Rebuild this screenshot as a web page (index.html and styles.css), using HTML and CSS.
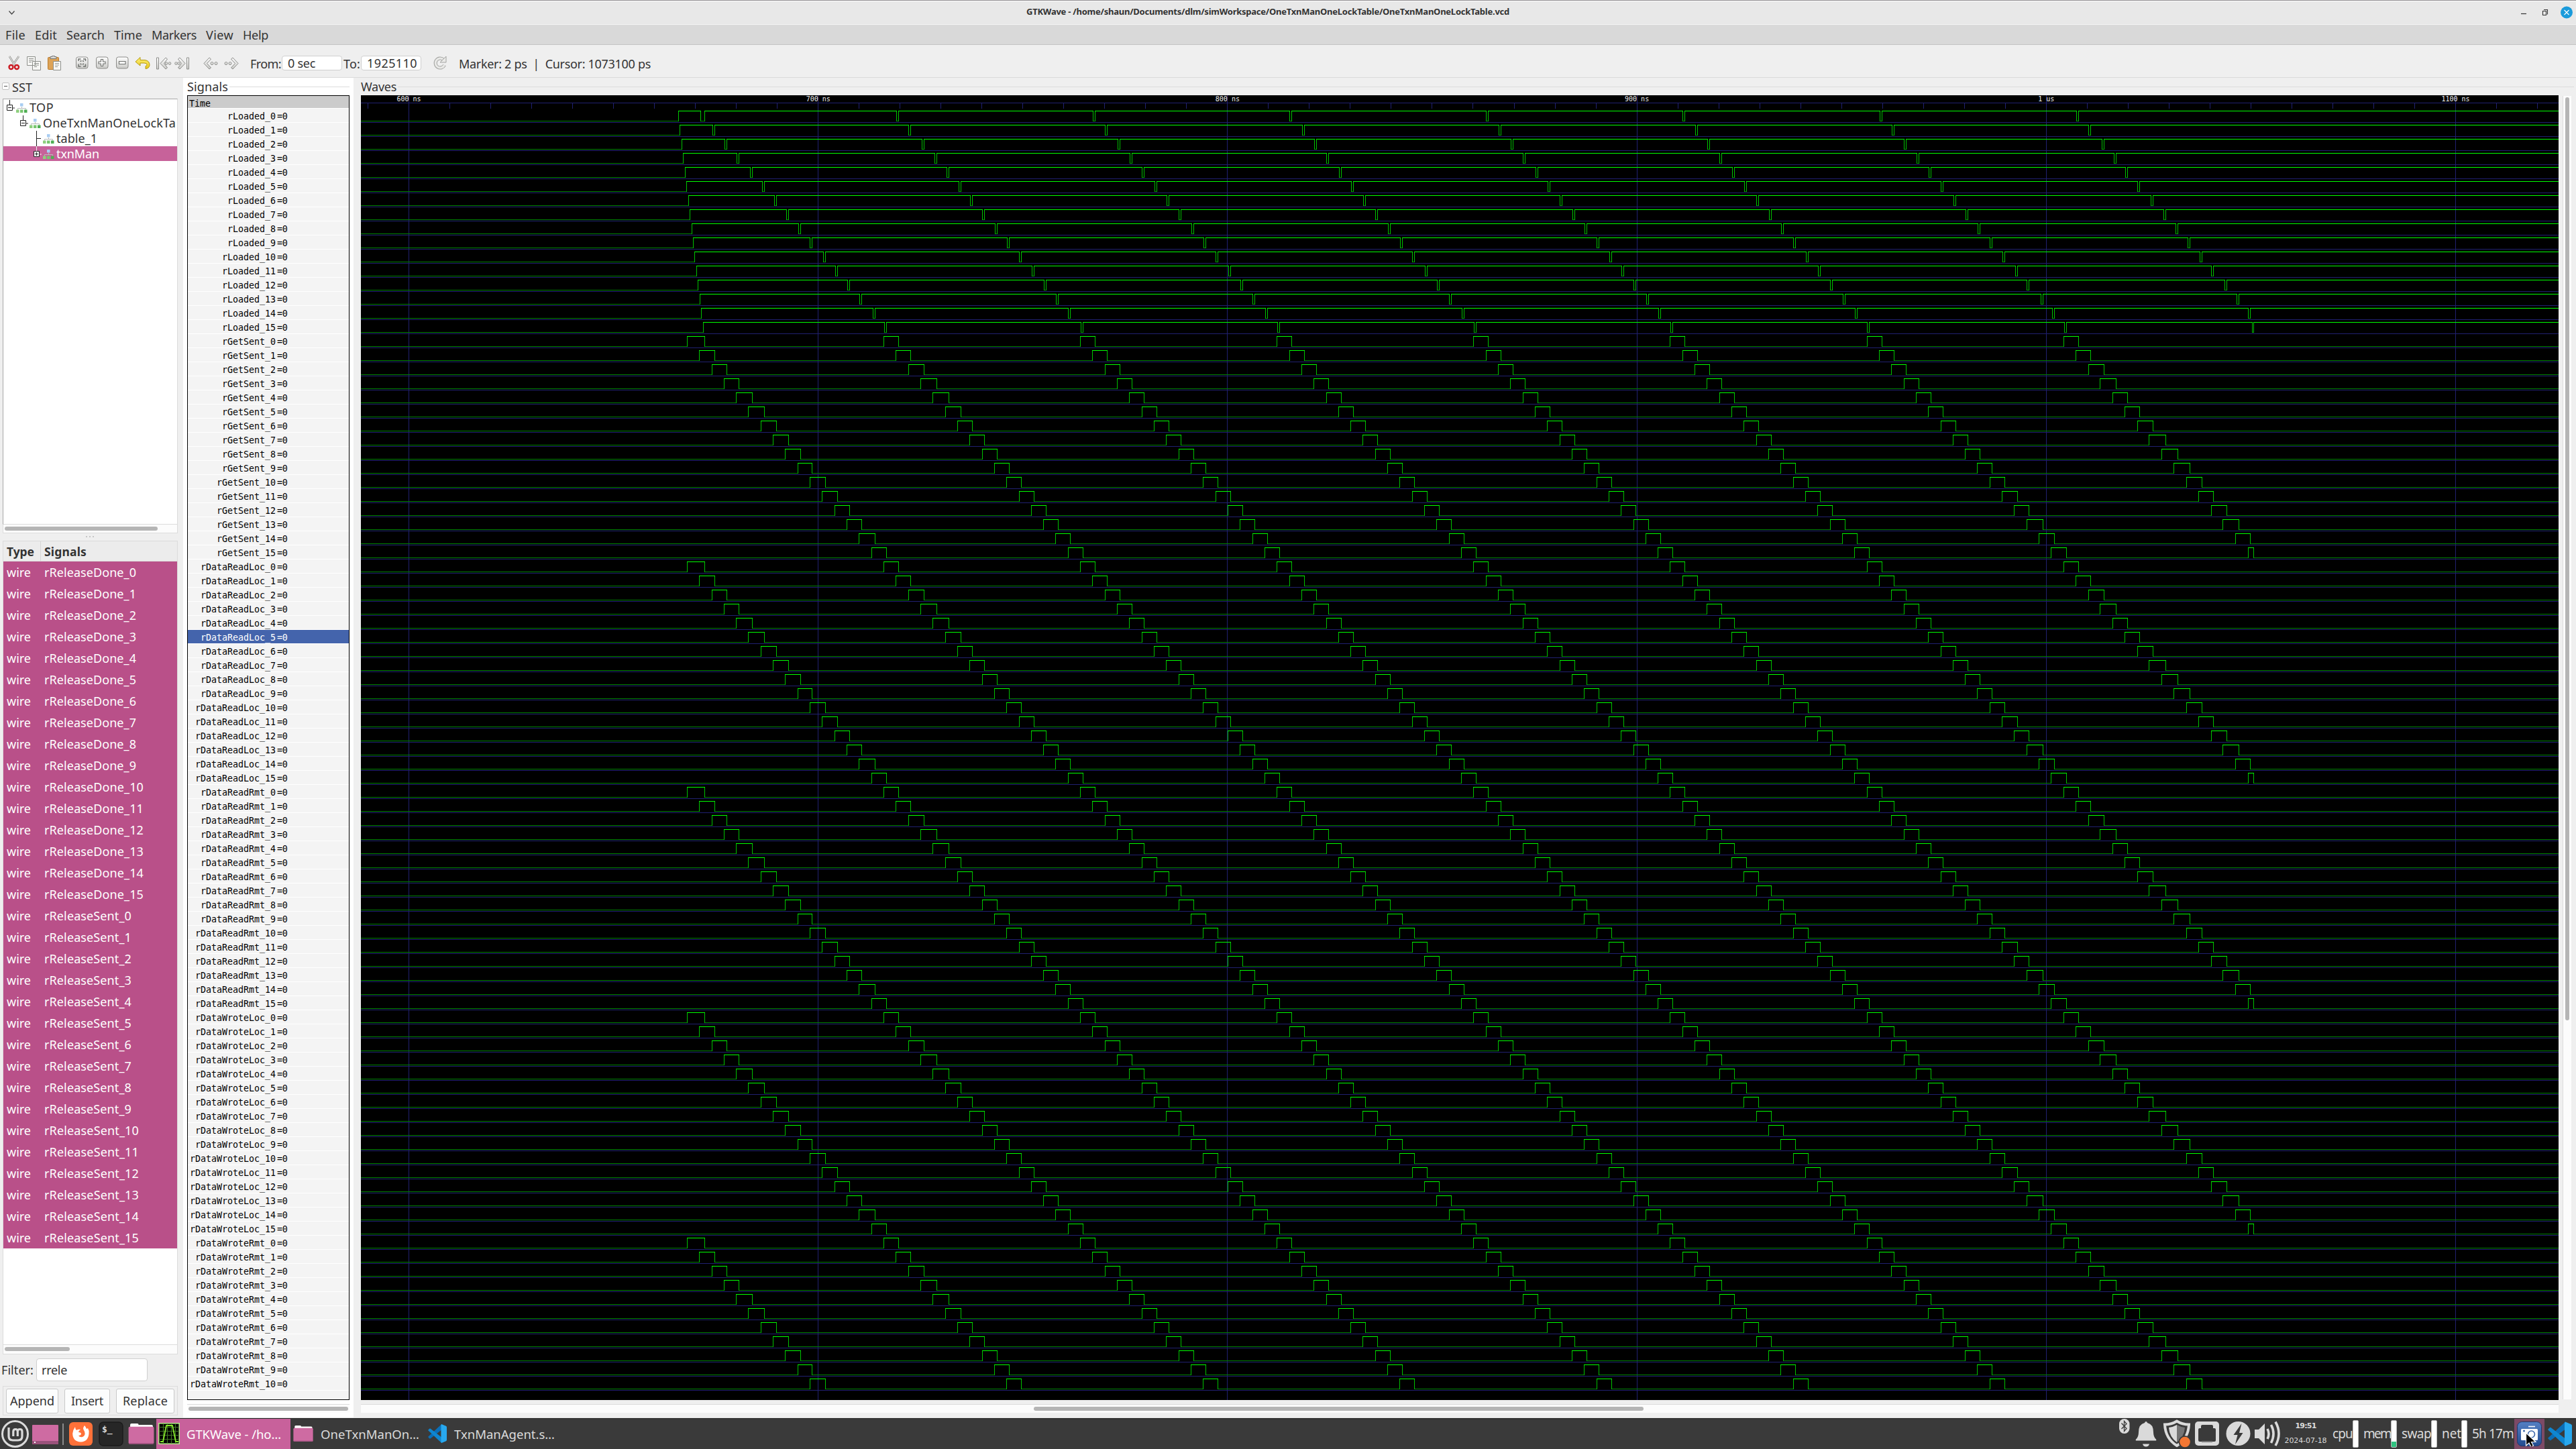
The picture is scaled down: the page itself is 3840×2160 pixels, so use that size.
FILE: index.html
```html
<!DOCTYPE html>
<html lang="en">
<head>
<meta charset="utf-8">
<title>GTKWave</title>
<link rel="stylesheet" href="styles.css">
</head>
<body>
<svg class="defs" width="0" height="0" aria-hidden="true">
  <defs>
    <linearGradient id="silver" x1="0" y1="0" x2="0" y2="1"><stop offset="0" stop-color="#ffffff"/><stop offset="1" stop-color="#c9c9c6"/></linearGradient>
    <linearGradient id="gold" x1="0" y1="0" x2="0" y2="1"><stop offset="0" stop-color="#fff27a"/><stop offset="1" stop-color="#e8c81a"/></linearGradient>
    <linearGradient id="camera" x1="0" y1="0" x2="0" y2="1"><stop offset="0" stop-color="#5580c4"/><stop offset="1" stop-color="#234c91"/></linearGradient>
    <symbol id="modules" viewBox="0 0 17 14">
      <path d="M8.500 5v3M2.500 9.500v-2h12v2" fill="none" stroke="#b9bcbc"/>
      <rect x="6" y="0" width="4.500" height="4.500" fill="#a9cdf2"/>
      <rect x="0" y="9.500" width="4.500" height="4.500" fill="#8fd07f"/><rect x="6" y="9.500" width="4.500" height="4.500" fill="#79c66f"/><rect x="12" y="9.500" width="4.500" height="4.500" fill="#4fae53"/>
    </symbol>
    <symbol id="folder" viewBox="0 0 40 32">
      <path d="M3 8V2q0-2 2-2h9q2 0 2 2h20q2 0 2 2v5z" fill="#fff"/>
      <rect x="0.500" y="5" width="39" height="26.500" rx="2" fill="#ce6ba2"/><rect x="1" y="30" width="38" height="1.500" fill="#a85484"/>
    </symbol>
    <symbol id="vscode" viewBox="0 0 36 36">
      <path d="M26 0v11L4.500 27.500Q3.500 28 2.800 27.300L.6 25.200Q0 24.500.6 23.800z" fill="#0a6fb8"/>
      <path d="M26 36V25L4.500 8.500Q3.500 8 2.800 8.700L.6 10.800Q0 11.500.6 12.200z" fill="#0f86d0"/>
      <path d="M26 0l8.500 3.500Q36 4.200 36 6v24q0 1.800-1.500 2.500L26 36q-1.500-.5-1-2.500V2.500Q24.800.7 26 0z" fill="#28a8ee"/>
    </symbol>
  </defs>
</svg>
<div class="window">
  <header class="titlebar">
    <svg class="chevron" width="11" height="8"><path d="M1.500 1.500l4 4.500 4-4.500" fill="none" stroke="#444" stroke-width="1.300"/></svg>
    <h1 class="title"><span data-fit="720">GTKWave - /home/shaun/Documents/dlm/simWorkspace/OneTxnManOneLockTable/OneTxnManOneLockTable.vcd</span></h1>
    <svg class="winbuttons" width="80" height="20">
      <path d="M1 11.500h8" stroke="#333" stroke-width="1.200"/>
      <path d="M33.500 7.500h5v6h-5zM35 5.500h5.500v7" fill="none" stroke="#333" stroke-width="1.100"/>
      <circle cx="69" cy="9.500" r="9" fill="#1b9bdb"/><path d="M65.500 6l7 7M72.500 6l-7 7" stroke="#fff" stroke-width="1.200"/>
    </svg>
  </header>
  <nav class="menubar">
    <span data-fit="30">File</span><span data-fit="33">Edit</span><span data-fit="57">Search</span><span data-fit="42">Time</span><span data-fit="67">Markers</span><span data-fit="41">View</span><span data-fit="38">Help</span>
  </nav>
  <div class="toolbar">
    <svg class="edit-icons" width="92" height="24">
      <path d="M2 2l8 13M16 2L7 15" stroke="#8f8f8c" stroke-width="2.600"/><path d="M2 2l8 13M16 2L7 15" stroke="#e8e8e6" stroke-width="1.200"/>
      <circle cx="4.500" cy="18" r="3" fill="none" stroke="#cb1a22" stroke-width="2.400"/><circle cx="13" cy="18" r="3" fill="none" stroke="#cb1a22" stroke-width="2.400"/>
      <g fill="#f7f7f5" stroke="#8d8f8b"><path d="M28.500 2.500h12v13h-12zM36.500 9.500h12v13h-12z"/><path d="M31 5.500h7M31 8h7M31 10.500h4M39 12.500h7M39 15h7M39 17.500h4"/></g>
      <rect x="59.500" y="3.500" width="16" height="18" rx="1" fill="#dda357" stroke="#b87a2d"/><path d="M63 5.500v-3h2.500v-1h4v1H72v3z" fill="#d8d8d5" stroke="#777"/>
      <path d="M67.500 9.500h11v13h-11z" fill="#f7f7f5" stroke="#8d8f8b"/><path d="M70 12.500h6M70 15h6M70 17.500h4" stroke="#9a9c98"/>
    </svg>
    <svg class="zoom-icons" width="80" height="22">
      <g fill="url(#silver)" stroke="#8b8b88"><rect x=".5" y="2" width="17.500" height="17" rx="3"/><rect x="30.500" y="2" width="17.500" height="17" rx="3"/><rect x="60.500" y="2" width="17.500" height="17" rx="3"/></g>
      <path d="M4 8V5h3.500M14.500 8V5H11M4 12.500v3.500h3.500M14.500 12.500v3.500H11M6.500 8.500l2-1M12 8.500l-2-1M6.500 12l2 1M12 12l-2 1" fill="none" stroke="#6e706d" stroke-width="1.500"/>
      <path d="M37.500 5.500h3v3.500h3.500v3h-3.500v3.500h-3V12H34V9h3.500z" fill="#fff" stroke="#6e706d" stroke-width="1.100"/><path d="M64.500 8.500h9.500v4h-9.500z" fill="#fff" stroke="#6e706d" stroke-width="1.100"/>
    </svg>
    <svg class="undo-icon" width="23" height="20"><path d="M1 8L8 1.500v4h7q7 1 7 7.500-.5 5-6 5.500v-4q2-.5 2-2 0-2.500-4-2.500H8v4z" fill="url(#gold)" stroke="#b59a10"/></svg>
    <svg class="nav-icons" width="125" height="22" fill="url(#silver)" stroke="#8c8d8a">
      <path d="M1.500 2h3v17h-3zM15 2l2.500 2-5 6.500 5 6.500-2.500 2-8-8.500z"/><circle cx="16" cy="10.500" r="1.800"/><circle cx="21" cy="10.500" r="1.800"/>
      <path d="M46.500 2h3v17h-3zM36 2l-2.500 2 5 6.500-5 6.500 2.500 2 8-8.500z"/><circle cx="34.500" cy="10.500" r="1.800"/><circle cx="30.500" cy="10.500" r="1.800"/>
      <path d="M80 2l2.500 2-6 6.500 6 6.500-2.500 2-8-8.500z"/><circle cx="84" cy="10.500" r="2"/><circle cx="90" cy="10.500" r="2"/>
      <path d="M115 2l-2.500 2 6 6.500-6 6.500 2.500 2 8-8.500z"/><circle cx="111" cy="10.500" r="2"/><circle cx="105" cy="10.500" r="2"/>
    </svg>
    <span class="from-label" data-fit="46">From:</span>
    <div class="time-entry"><span data-fit="41">0 sec</span></div>
    <span class="to-label" data-fit="25">To:</span>
    <div class="time-entry"><span data-fit="75">1925110</span></div>
    <svg class="reload-icon" width="22" height="24"><path d="M16 7A7 7 0 1 0 17.500 15" fill="none" stroke="#a3a4a1" stroke-width="5"/><path d="M16 7A7 7 0 1 0 17.500 15" fill="none" stroke="#e9e9e7" stroke-width="3"/><path d="M20 2v9h-9z" fill="#e9e9e7" stroke="#a3a4a1"/></svg>
    <span class="marker-label" data-fit="286">Marker: 2 ps&nbsp; |&nbsp; Cursor: 1073100 ps</span>
  </div>
  <main class="panes">
    <aside class="sst">
      <div class="sst-title"><i class="collapse"></i><span data-fit="30">SST</span></div>
      <div class="tree">
        <div class="node level0"><svg width="12" height="23"><path d="M4.500 0v7M.5 7.500h8v8h-8zM2 11.500h5M9 12h3" fill="none" stroke="#222"/></svg><svg class="mod" width="17" height="14"><use href="#modules"/></svg><span data-fit="36">TOP</span></div>
        <div class="node level1"><svg width="12" height="23"><path d="M4.500 0v7M.5 7.500h8v8h-8zM2 11.500h5M9 12h3" fill="none" stroke="#222"/></svg><svg class="mod" width="17" height="14"><use href="#modules"/></svg><span data-fit="198">OneTxnManOneLockTa</span></div>
        <div class="node level2"><svg width="12" height="23"><path d="M4.500 0v23M5 11.500h6" fill="none" stroke="#222"/></svg><svg class="mod" width="17" height="14"><use href="#modules"/></svg><span data-fit="61">table_1</span></div>
        <div class="node level2 selected"><svg width="12" height="23"><path d="M4.500 0v7M9 12h3" stroke="#eee"/><path d="M.5 7.500h8v8h-8z" fill="#fff" stroke="#222"/><path d="M2 11.500h5M4.500 9v5" stroke="#222"/></svg><svg class="mod" width="17" height="14"><use href="#modules"/></svg><span data-fit="64">txnMan</span></div>
      </div>
      <div class="hscroll tree-scroll"><i></i></div>
      <div class="grip"><i></i><i></i><i></i></div>
      <div class="table-head"><b class="type" data-fit="41">Type</b><b data-fit="63">Signals</b></div>
      <div class="table" id="wires"></div>
      <div class="hscroll table-scroll"><i></i></div>
      <div class="filter"><span data-fit="48">Filter:</span><div class="filter-entry"><span data-fit="38">rrele</span></div></div>
      <div class="actions"><div class="button append"><span data-fit="66">Append</span></div><div class="button insert"><span data-fit="48">Insert</span></div><div class="button replace"><span data-fit="67">Replace</span></div></div>
    </aside>
    <section class="signals">
      <div class="frame-title"><span data-fit="61">Signals</span></div>
      <div class="names"><div class="time-head">Time</div><div id="names"></div></div>
      <div class="hscroll names-scroll"><i></i></div>
    </section>
    <section class="waves">
      <div class="frame-title"><span data-fit="53">Waves</span></div>
      <div class="wave-row"><svg id="wave" class="wave" width="3276" height="1945" viewBox="538 142 3276 1945"></svg><div class="vscroll"><i></i></div></div>
      <div class="hscroll wave-scroll"><i></i></div>
    </section>
  </main>
</div>
<footer class="taskbar">
  <svg class="launchers" width="231" height="45">
    <circle cx="22.500" cy="22.500" r="19" fill="none" stroke="#dadada" stroke-width="3"/>
    <path d="M13 13v13q0 6 6 6h8q6 0 6-6v-7q0-3.500-3.300-3.500T26.300 19v7M26.300 26v-7q0-3.500-3.200-3.500T19.800 19v7" fill="none" stroke="#dadada" stroke-width="3.200"/>
    <rect x="48" y="9" width="39" height="29" rx="1" fill="#ce6ba2"/><rect x="48" y="33" width="39" height="5" fill="#9a527b"/><rect x="51" y="34" width="2" height="2" fill="#fff"/>
    <rect x="93" y="7" width="2" height="32" fill="#8b8b8b"/>
    <rect x="103" y="5" width="35" height="35" rx="6" fill="#ff7139"/>
    <path d="M112 12q0 3 2 5 3-2 6-1-3 2-3 4 4 0 4 3-1 2-4 2 2 3 6 2 5-2 3-8-2-3-2-5 1-3 2-4 2 2 3 5l2-1q2 3 1.500 8-1 12-12 12.500-12-.5-12.300-12.500.3-5 3.800-10z" fill="#fff"/>
    <rect x="148" y="5" width="35" height="35" rx="6" fill="#262626" stroke="#1b1b1b" stroke-width="1.500"/>
    <text x="152" y="20" class="prompt">$_</text>
    <svg x="191" y="7" width="39" height="31"><use href="#folder"/></svg>
  </svg>
  <div class="task active">
    <svg width="32" height="32"><rect x=".5" y=".5" width="31" height="31" fill="#000" stroke="#b7ee8b" stroke-width="2"/><path d="M7.500 1v30M13.500 1v30M19.500 1v30M25.500 1v30M1 6.500h30M1 12.500h30M1 18.500h30M1 24.500h30" stroke="#3f7524" stroke-width="1.200"/><path d="M3 28h4L12 4h9l5 24h4" fill="none" stroke="#86e82b" stroke-width="1.800"/></svg>
    <span data-fit="141">GTKWave - /ho…</span>
  </div>
  <div class="task files"><svg width="30" height="24" preserveAspectRatio="none"><use href="#folder"/></svg><span data-fit="147">OneTxnManOn…</span></div>
  <div class="task code"><svg width="28" height="28"><use href="#vscode"/></svg><span data-fit="150">TxnManAgent.s…</span></div>
  <svg class="tray" width="245" height="45" fill="#dadada">
    <rect x="3" y="0" width="15.500" height="22" rx="7.500"/><path d="M6.500 6.500l7.500 8-3.500 4v-15l3.500 4-7.500 7.500" fill="none" stroke="#3a3a3a" stroke-width="1.300"/>
    <path d="M43 4q1.500 0 2 2 9 2 9 14 0 7 4 10.500.8 1.500 0 2H28q-.8-.5 0-2 4-3.500 4-10.500 0-12 9-14 .5-2 2-2zM38 37.500h10q-1 4-5 4t-5-4z"/>
    <path d="M89 3.500q8 5 18 5-1 21-18 31.500-17-10.500-18-31.500 10 0 18-5z" fill="none" stroke="#dadada" stroke-width="4"/><path d="M89 9q5 3 12 4-1 14-12 22z" fill="#757575"/><path d="M89 9q-5 3-12 4 1 14 12 22z"/>
    <circle cx="101" cy="34.500" r="9.500" fill="#3a3a3a"/><circle cx="101" cy="34.500" r="7.800" fill="#f47733"/>
    <rect x="116" y="4" width="36" height="36" rx="5"/><path d="M121 16q0-2 2-2h2v-3q0-2 2-2h14q2 0 2 2v3h2q2 0 2 2v16q0 2-2 2h-22q-2 0-2-2z" fill="#3a3a3a"/><path d="M126 34h16" stroke="#777" stroke-width="2"/>
    <circle cx="180.500" cy="22" r="18"/><path d="M185.500 7l-12 17h6l-3.500 14 11.500-17h-5.500z" fill="#3a3a3a"/>
    <path d="M205 16h6l9-9v31l-9-9h-6z"/><path d="M224 15q4 7.500 0 15M229.500 9q7 13 0 27M236 4.500q10 17.500 0 35.500" fill="none" stroke="#dadada" stroke-width="3.600"/>
  </svg>
  <div class="clock"><b data-fit="31">19:51</b><span data-fit="63">2024-07-18</span></div>
  <div class="meters"><span data-fit="30">cpu</span><i class="meter"></i><span data-fit="41">mem</span><i class="meter mem"></i><span data-fit="44">swap</span><i class="meter"></i><span data-fit="29">net</span><i class="meter"></i><span class="battery" data-fit="62">5h 17m</span></div>
  <div class="shot">
    <svg width="37" height="37"><rect x=".5" y=".5" width="36" height="36" rx="7" fill="url(#camera)" stroke="#1e3a6c"/><path d="M17 7.500h10" stroke="#fff" stroke-width="1.600"/><rect x="6" y="11" width="25" height="17" rx="1.500" fill="#fff"/><circle cx="21.500" cy="19" r="5" fill="#fff" stroke="#3d67ab" stroke-width="1.600"/><circle cx="10.500" cy="14" r="1.500" fill="#3d67ab"/><path d="M13.500 17v19l4.500-4 3 6 3.500-2-3-5.500h6.500z" fill="#000" stroke="#fff" stroke-width="1.200"/></svg>
  </div>
  <svg class="code-tray" width="36" height="37"><use href="#vscode"/></svg>
</footer>
<script src="app.js"></script>
</body>
</html>
```
FILE: styles.css
```css
* { box-sizing: border-box; }
body { margin: 0; width: 3840px; height: 2160px; overflow: hidden; background: #efefef; color: #333; font: 18px/22px "Noto Sans", "Open Sans", sans-serif; display: flex; flex-direction: column; }
.defs { position: absolute; }
span, b { white-space: pre; }
i { display: block; }
svg { display: block; flex: none; }
.window { height: 2114px; display: flex; flex-direction: column; border-bottom: 1px solid #e2e2e2; }

.titlebar { height: 37px; border-top: 1px solid #8f8b8f; box-shadow: inset 0 1px #fff; border-bottom: 1px solid #f4f4f4; background: #e8e8e8; display: flex; align-items: flex-start; }
.chevron { margin: 14px 0 0 12px; }
.title { margin: 8px 0 0 1507px; width: 2227px; font: bold 13px/17px "Noto Sans", sans-serif; }
.winbuttons { margin: 8px 0 0; }
.menubar { height: 30px; padding: 4px 0 0 8px; display: flex; gap: 14px; background: #d9d9d9; border-bottom: 1px solid #c4c4c4; }
.toolbar { height: 49px; padding-left: 12px; border-bottom: 1px solid #dadada; display: flex; align-items: flex-start; }
.edit-icons { margin: 15px 0 0; }
.zoom-icons { margin: 16px 0 0 9px; }
.undo-icon { margin: 17px 0 0 8px; }
.nav-icons { margin: 17px 0 0 8px; }
.toolbar span { margin-top: 17px; }
.toolbar .from-label { margin-left: 16px; }
.toolbar .to-label { margin-left: 2px; }
.time-entry { margin: 16px 0 0 1px; width: 90px; height: 22px; background: #fff; border: 1px solid #cfcfcf; border-radius: 4px; padding-left: 8px; line-height: 20px; }
.reload-icon { margin: 15px 0 0 17px; }
.toolbar .marker-label { margin-left: 17px; }

.panes { flex: 1; display: flex; min-height: 0; }
.sst { width: 273px; padding-left: 4px; display: flex; flex-direction: column; }
.sst-title { height: 31px; display: flex; gap: 4px; padding-top: 3px; margin-left: -1px; }
.collapse { width: 11px; height: 11px; margin-top: 4px; border: 1px solid #c2c2c2; border-radius: 2px; background: linear-gradient(#555, #555) center / 5px 1px no-repeat #fdfdfd; }
.tree { width: 261px; height: 635px; background: #fff; border: 1px solid #dcdcdc; border-top-color: #a8a8a8; border-left-color: #a8a8a8; padding-top: 1px; overflow: hidden; }
.node { height: 23px; display: flex; align-items: flex-start; line-height: 23px; }
.node .mod { margin: 5px 3px 0 2px; }
.level0 { padding-left: 5px; }
.level1 { padding-left: 25px; }
.level2 { padding-left: 45px; }
.selected { background: #c7629a; color: #fff; height: 22px; }
.hscroll { height: 13px; background: #fcfcfc; border: 1px solid #dcdcdc; padding: 3px 2px; }
.hscroll i { height: 6px; border-radius: 3px; background: #b5b5b5; }
.tree-scroll { width: 261px; border-top: 0; }
.tree-scroll i { width: 228px; }
.grip { height: 11px; display: flex; gap: 3px; padding: 4px 0 0 124px; }
.grip i { width: 2px; height: 2px; background: #c6c6c6; }
.table-head { width: 261px; height: 31px; border: 1px solid #dcdcdc; background: #ececec; display: flex; line-height: 30px; padding-left: 5px; font-size: 17.500px; }
.type { box-sizing: content-box; padding-right: 9px; border-right: 1px solid #d6d6d6; margin-right: 5px; }
.table { width: 261px; height: 1168px; background: #fff; border: 1px solid #dcdcdc; border-top: 0; }
.wire { height: 32px; background: #b95089; color: #fff; line-height: 32px; display: flex; padding-left: 5px; }
.wire span:first-child { width: 56px; }
.table-scroll { width: 261px; height: 14px; border-top: 0; }
.table-scroll i { width: 97px; }
.filter { height: 47px; display: flex; margin-left: -2px; padding-top: 6px; line-height: 34px; gap: 4px; }
.filter-entry { width: 166px; height: 34px; border: 1px solid #cfcfcf; border-radius: 4px; background: #fff; padding-left: 7px; line-height: 32px; }
.actions { width: 261px; height: 44px; border: 1px solid #dcdcdc; display: flex; gap: 9px; padding: 3px 4px; }
.button { height: 37px; border: 1px solid #c9c9c9; border-radius: 3px; background: #fcfdfd; display: flex; justify-content: center; line-height: 34px; }
.append { width: 78px; }
.insert { width: 68px; }
.replace { width: 87px; }

.frame-title { height: 26px; padding-top: 2px; display: flex; }
.frame-title::after { content: ""; flex: 1; margin: 11px 0 0 2px; border-top: 1px solid #dcdcdc; }
.signals { width: 254px; background: #fff; padding: 0 6px; }
.names { width: 242px; height: 1945px; border: 1px solid #000; background: #f4f4f4; font: 13.300px/20px "DejaVu Sans Mono", monospace; color: #000; }
.time-head { height: 19px; padding-left: 2px; background: #cbcbcb; border-bottom: 1px solid #fff; line-height: 23px; }
.name { height: 21px; border-bottom: 1px solid #fff; display: flex; gap: 2px; line-height: 23px; white-space: pre; }
.name span:first-child { width: 131px; text-align: right; }
.name span:last-child { letter-spacing: -.2px; }
.name.active { background: #4464ac; color: #fff; }
.names-scroll { margin-top: 6px; border-width: 1px 0 0; }
.waves { flex: 1; padding-left: 11px; padding-right: 3px; }
.wave-row { display: flex; gap: 6px; }
.wave { background: #000; }
.wave text { font: 10px "DejaVu Sans Mono", monospace; fill: #f0f0f0; text-anchor: middle; }
.vscroll { width: 13px; height: 1943px; margin-top: 1px; background: #fcfcfc; border-left: 1px solid #dcdcdc; padding: 2px 3px; }
.vscroll i { width: 6px; height: 1376px; border-radius: 3px; background: #b5b5b5; }
.wave-scroll { width: 3276px; margin-top: 6px; border-width: 1px 0 0; padding-left: 1003px; }
.wave-scroll i { width: 909px; }

.taskbar { height: 46px; background: #3a3a3a; border-top: 1px solid #222; display: flex; color: #dadada; line-height: 45px; font-size: 18.500px; }
.prompt { font: bold 13px "DejaVu Sans Mono", monospace; fill: #ddd; }
.task { display: flex; align-items: flex-start; }
.task svg { margin-top: 6px; }
.active.task { width: 200px; margin-left: 2px; background: #c8619b; color: #fff; padding-left: 3px; gap: 10px; }
.files { width: 205px; padding-left: 4px; gap: 11px; }
.files svg { margin-top: 10px; }
.code { width: 2518px; gap: 11px; }
.code svg { margin-top: 8px; }
.clock { width: 68px; margin-left: 2px; display: flex; flex-direction: column; align-items: center; font: 11px/22px "DejaVu Sans", sans-serif; }
.meters { width: 277px; flex: none; display: flex; padding-left: 6px; font-size: 19px; }
.meter { width: 9px; height: 41px; margin: 2px 7px 0 0; background: #fff; border: 1px solid #bbb; border-radius: 2px; }
.mem { background: linear-gradient(#fff 80%, #2fc480 80%); }
.shot { width: 45px; background: #7d4a66; padding: 4px 0 0 4px; }
.code-tray { margin: 4px 0 0 5px; }
.code, .shot, .clock { flex: none; }
```
FILE: app.js
```js
// Signal groups in display order, with the number of visible members.
const groups = [["rLoaded", 16], ["rGetSent", 16], ["rDataReadLoc", 16], ["rDataReadRmt", 16], ["rDataWroteLoc", 16], ["rDataWroteRmt", 11]];
const names = document.getElementById("names");
const wires = document.getElementById("wires");

function addRow(parent, cls, texts) {
  const row = document.createElement("div");
  row.className = cls;
  for (const t of texts) {
    const s = document.createElement("span");
    s.textContent = t;
    row.append(s);
  }
  parent.append(row);
  return row;
}

for (const kind of ["Done", "Sent"]) {
  for (let k = 0; k < 16; k++) {
    const row = addRow(wires, "wire", ["wire", `rRelease${kind}_${k}`]);
    row.children[0].dataset.fit = 36;
    row.children[1].dataset.fit = (kind === "Done" ? 137 : 130) + (k > 9 ? 11 : 0);
  }
}

// Pulse timing in canvas pixels: one transaction slot is 18.32px wide,
// with the slots that settle early or late listed by number.
const slot = 18.32;
const falls = {}, rises = {};
[1050, 1065, 1083, 1101, 1121, 1139, 1157, 1175, 1193, 1210, 1230, 1248, 1266, 1284, 1304, 1321, 1339, 1357, 1377, 1396, 1414, 1432, 1449, 1467].forEach((x, i) => { falls[i] = x; });
[3007, 3024, 3045, 3062, 3080, 3098, 3116, 3136, 3154, 3171, 3189, 3209, 3228, 3246, 3264, 3282, 3299, 3319, 3337, 3354, 3359].forEach((x, i) => { falls[107 + i] = x; });
[3076, 3094, 3113, 3130, 3149, 3167, 3186, 3203, 3222, 3240, 3259, 3277, 3296, 3313, 3332, 3351].forEach((x, i) => { rises[112 + i] = x; });
const rise = n => rises[n] ?? Math.round(1317 + slot * (n - 16));
const fall = n => falls[n] ?? Math.round(1339 + slot * (n - 16));

let high = "", low = "", edge = "", grid = "", row = 0;
function trace(y, changes) {
  let x = 538, up = false;
  for (const c of changes.concat(3814)) {
    if (up) high += `M${x} ${y + .5}H${c + 1}`;
    else low += `M${x} ${y + 15.5}H${c + 1}`;
    if (c < 3814) edge += `M${c + .5} ${y}V${y + 16}`;
    x = c;
    up = !up;
  }
}
for (const [group, count] of groups) {
  for (let k = 0; k < count; k++, row++) {
    addRow(names, "name" + (group === "rDataReadLoc" && k === 5 ? " active" : ""), [`${group}_${k}`, "=0"]);
    const y = 165 + 21 * row, changes = [];
    if (group === "rLoaded") changes.push(Math.round(1011 + 2.44 * k));
    for (let n = k; n < 128; n += 16) {
      if (group === "rLoaded") changes.push(n === 0 ? 1044 : fall(n) - (n === 127 ? 2 : 3), fall(n));
      else changes.push(rise(n), fall(n));
    }
    trace(y, changes);
    grid += `M538 ${y + 17.5}H3814`;
  }
}
grid += "M538 153.500H3814";
let labels = "";
for (let i = -1; i < 53; i++) {
  const x = Math.floor(609.2 + 61.03 * i) + .5;
  grid += i % 10 === 0 ? `M${x} 142V2087` : `M${x} 153V162`;
}
["600 ns", "700 ns", "800 ns", "900 ns", "1 us", "1100 ns"].forEach((t, i) => {
  labels += `<text x="${609.500 + 610.2 * i}" y="151">${t}</text>`;
});
document.getElementById("wave").innerHTML =
  `<g fill="none" shape-rendering="crispEdges"><path stroke="#202070" d="${grid}"/><path stroke="#008000" d="${low}"/><path stroke="#00c000" d="${edge}"/><path stroke="#00ff00" d="${high}"/></g>${labels}`;

// Track labels to the widths the toolkit font gives them.
for (const el of document.querySelectorAll("[data-fit]")) {
  const range = document.createRange();
  range.selectNodeContents(el);
  const w = range.getBoundingClientRect().width;
  el.style.letterSpacing = (el.dataset.fit - w) / el.textContent.length + "px";
}
```
